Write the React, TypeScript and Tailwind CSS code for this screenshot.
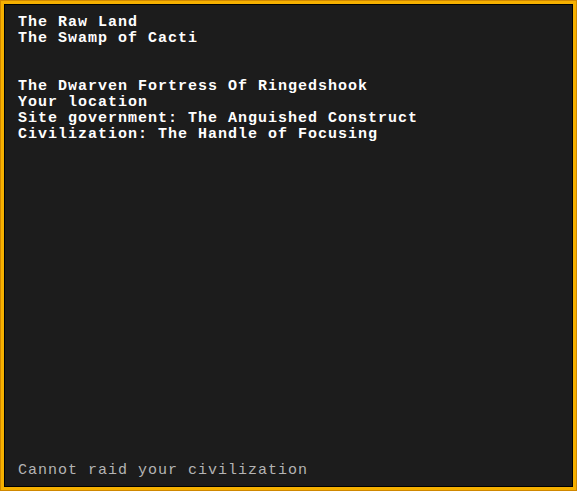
import React from "react";

export default function App() {
  const lines = [
    "The Raw Land",
    "The Swamp of Cacti",
    "\u00a0",
    "\u00a0",
    "The Dwarven Fortress Of Ringedshook",
    "Your location",
    "Site government: The Anguished Construct",
    "Civilization: The Handle of Focusing",
  ];
  return (
    <div className="w-[577px] h-[491px] bg-[#d08800] p-[1px]">
      <div className="w-full h-full bg-[#f5b000] p-[3px]">
        <div
          className="w-full h-full bg-[#1c1c1c] border border-black flex flex-col pl-[13px] pt-[10px] pb-[7px] text-[15px] tracking-[1px] leading-[16px]"
          style={{ fontFamily: '"Liberation Mono", "DejaVu Sans Mono", monospace' }}
        >
          <div className="flex flex-col text-white font-bold">
            {lines.map((l, i) => (
              <div key={i} className="h-[16px] whitespace-pre">{l}</div>
            ))}
          </div>
          <div className="mt-auto h-[16px] text-[#b4b4b4] whitespace-pre">Cannot raid your civilization</div>
        </div>
      </div>
    </div>
  );
}
